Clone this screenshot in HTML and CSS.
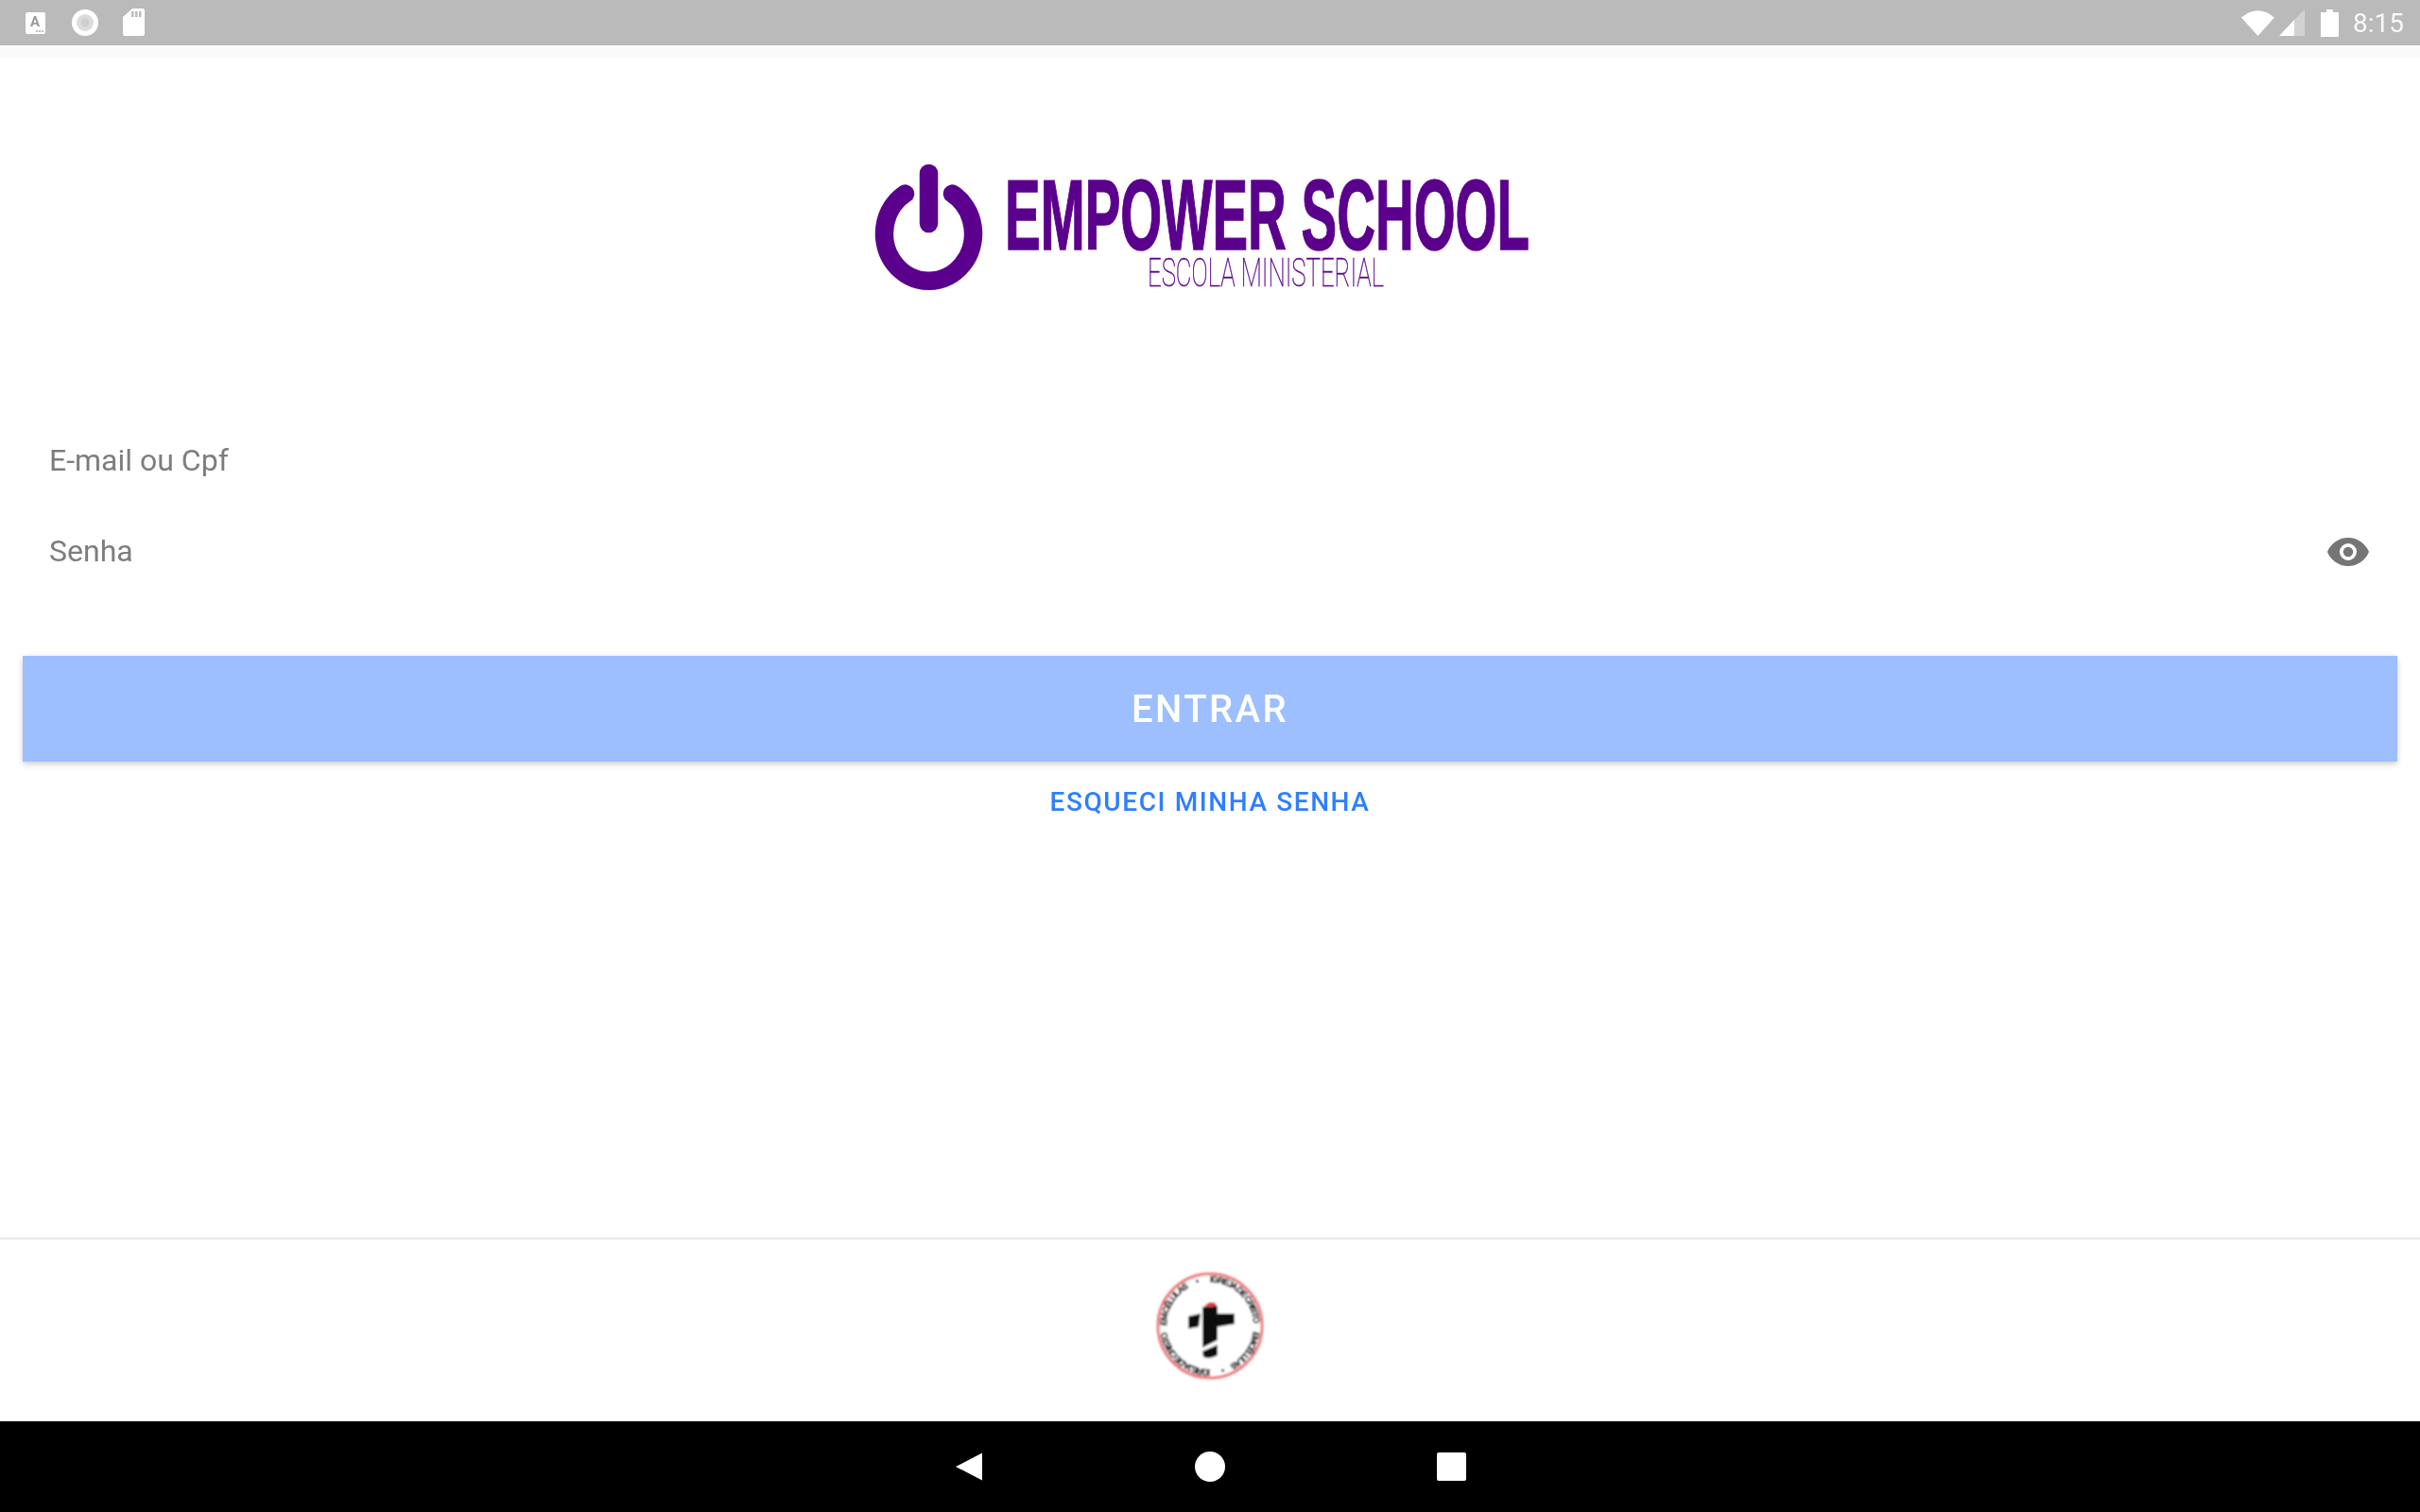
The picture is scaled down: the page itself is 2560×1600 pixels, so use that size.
FILE: index.html
```html
<!DOCTYPE html>
<html lang="pt-BR">
<head>
<meta charset="utf-8">
<title>Empower School</title>
<link rel="stylesheet" href="styles.css">
</head>
<body>
<div class="app">
  <header class="status-bar">
    <div class="status-left">
      <svg class="ic-a" viewBox="0 0 21 23"><rect width="21" height="23" rx="2" fill="#fff"/><text x="10" y="15" class="ic-a-letter">A</text><rect x="11" y="19" width="2" height="2" fill="#bbb"/><rect x="14" y="19" width="2" height="2" fill="#bbb"/><rect x="17" y="19" width="2" height="2" fill="#bbb"/></svg>
      <svg class="ic-rec" viewBox="0 0 28 28"><circle cx="14" cy="14" r="14" fill="#fff"/><circle cx="14" cy="14" r="9" fill="#dcdcdc"/><circle cx="14" cy="14" r="4.5" fill="#cfcfcf"/></svg>
      <svg class="ic-sd" viewBox="0 0 23 29"><path d="M10 0H21a2 2 0 0 1 2 2V27a2 2 0 0 1-2 2H2a2 2 0 0 1-2-2V9Z" fill="#fff"/><rect x="9" y="3" width="2.5" height="6" fill="#bbb"/><rect x="13" y="3" width="2.5" height="6" fill="#bbb"/><rect x="17" y="3" width="2.5" height="6" fill="#bbb"/></svg>
    </div>
    <div class="status-right">
      <svg class="ic-wifi" viewBox="0 0 35 28"><path d="M0 8.500Q17.500 -6 35 8.500L17.500 28Z" fill="#fff"/></svg>
      <svg class="ic-signal" viewBox="0 0 27 28"><path d="M27 0V28H16V11Z" fill="#d2d2d2"/><path d="M16 11V28H0Z" fill="#fff"/></svg>
      <svg class="ic-battery" viewBox="0 0 19 29"><path d="M6 0H13V3H19V29H0V3H6Z" fill="#fff"/></svg>
      <span class="clock">8:15</span>
    </div>
  </header>
  <div class="status-shade"></div>

  <main class="login">
    <svg class="logo" viewBox="0 0 720 160" role="img" aria-label="Empower School">
      <path class="logo-ring" d="M37.500 45A47 50 0 1 0 87.500 45"/>
      <path class="logo-bar" d="M62.500 23.500V76.500"/>
      <text class="logo-title" x="143" y="104" textLength="555" lengthAdjust="spacingAndGlyphs">EMPOWER SCHOOL</text>
      <text class="logo-sub" x="294" y="143" textLength="250" lengthAdjust="spacingAndGlyphs">ESCOLA MINISTERIAL</text>
    </svg>

    <form class="form">
      <div class="field"><span class="placeholder">E-mail ou Cpf</span></div>
      <div class="field">
        <span class="placeholder">Senha</span>
        <svg class="eye" viewBox="0 0 24 24"><path fill-rule="evenodd" d="M12 4.500C7 4.500 2.730 7.610 1 12c1.730 4.390 6 7.500 11 7.500s9.270-3.110 11-7.500c-1.730-4.390-6-7.500-11-7.500zM12 7.500a4.500 4.500 0 1 0 0 9a4.500 4.500 0 1 0 0-9zM12 9.400a2.600 2.600 0 1 1 0 5.200a2.600 2.600 0 1 1 0-5.200z"/></svg>
      </div>
      <div class="submit">ENTRAR</div>
      <a class="forgot">ESQUECI MINHA SENHA</a>
    </form>
  </main>

  <footer class="brand-footer">
    <svg class="seal" viewBox="0 0 120 120" role="img" aria-label="Igreja de Cristo em Células">
      <defs>
        <filter id="soft" x="-10%" y="-10%" width="120%" height="120%"><feGaussianBlur stdDeviation="0.9"/></filter>
        <path id="seal-path" d="M14 60A46 46 0 1 1 106 60A46 46 0 1 1 14 60"/>
      </defs>
      <g filter="url(#soft)">
        <circle class="seal-rim" cx="60" cy="60" r="55"/>
        <text class="seal-text" textLength="49"><textPath href="#seal-path" startOffset="0%">EM CÉLULAS</textPath></text>
        <text class="seal-text"><textPath href="#seal-path" startOffset="20%">•</textPath></text>
        <text class="seal-text" textLength="70"><textPath href="#seal-path" startOffset="25%">IGREJA DE CRISTO</textPath></text>
        <text class="seal-text" textLength="45"><textPath href="#seal-path" startOffset="52%">EM CÉLULAS</textPath></text>
        <text class="seal-text"><textPath href="#seal-path" startOffset="70%">•</textPath></text>
        <text class="seal-text" textLength="66"><textPath href="#seal-path" startOffset="75%">IGREJA DE CRISTO</textPath></text>
        <path class="seal-cross" d="M37 50L50 47L48 61L37 63Z"/>
        <path class="seal-cross" d="M52 40L68 39V47H86V58L68 61V75L52 83Z"/>
        <path class="seal-cross" d="M52 87L68 80V91Q60 96 53 93Z"/>
        <path class="seal-red" d="M54 40Q58 33 66 36L67 39Z"/>
      </g>
    </svg>
  </footer>

  <nav class="nav-bar">
    <svg class="nav-back" viewBox="0 0 30 32"><path d="M29 1.500V30.500L1 16Z"/></svg>
    <svg class="nav-home" viewBox="0 0 32 32"><circle cx="16" cy="16" r="16"/></svg>
    <svg class="nav-recent" viewBox="0 0 31 30"><rect width="31" height="30" rx="2"/></svg>
  </nav>
</div>
</body>
</html>
```

FILE: styles.css
```css
* { box-sizing: border-box; }

html, body {
  margin: 0;
  padding: 0;
  background: #fff;
}

.app {
  width: 2560px;
  height: 1600px;
  display: flex;
  flex-direction: column;
  overflow: hidden;
  font-family: Roboto, "Liberation Sans", sans-serif;
  will-change: transform;
}

/* Status bar */
.status-bar {
  height: 48px;
  flex: none;
  background: #bababa;
  display: flex;
  justify-content: space-between;
  align-items: center;
  padding: 0 17px 0 27px;
}
.status-left, .status-right { display: flex; align-items: center; }
.ic-a { width: 21px; height: 23px; margin-right: 28px; }
.ic-a-letter { font: 700 15px Roboto, sans-serif; fill: #9a9a9a; text-anchor: middle; }
.ic-rec { width: 28px; height: 28px; margin-right: 26px; }
.ic-sd { width: 23px; height: 29px; margin-top: -1px; }
.ic-wifi { width: 35px; height: 28px; margin-right: 5px; }
.ic-signal { width: 27px; height: 28px; margin-right: 17px; }
.ic-battery { width: 19px; height: 29px; margin-right: 15px; }
.clock {
  font-size: 28px;
  line-height: 48px;
  color: #f8f8f8;
  padding-top: 1px;
}
.status-shade { height: 12px; flex: none; background: #fafafa; }

/* Login */
.login { flex: none; }
.logo {
  display: block;
  width: 720px;
  height: 160px;
  margin: 100px 0 0 920px;
  overflow: visible;
}
.logo-ring, .logo-bar {
  fill: none;
  stroke: #5b008c;
  stroke-width: 19.500;
  stroke-linecap: round;
}
.logo-title {
  font-family: "Liberation Sans Narrow", "Liberation Sans", sans-serif;
  font-weight: 700;
  font-size: 105px;
  fill: #5b008c;
  stroke: #5b008c;
  stroke-width: 1.500px;
}
.logo-sub {
  font-family: Roboto, sans-serif;
  font-weight: 100;
  font-size: 43px;
  fill: #5b008c;
  stroke: #5b008c;
  stroke-width: 0.500px;
}

.form {
  margin: 119px 24px 0;
  display: flex;
  flex-direction: column;
}
.field {
  height: 96px;
  padding: 0 28px 0 28px;
  display: flex;
  align-items: center;
  justify-content: space-between;
}
.placeholder {
  font-size: 32px;
  line-height: 96px;
  color: #7d7d7d;
}
.eye { width: 48px; height: 48px; fill: #757575; margin-top: 2px; }

.submit {
  margin-top: 63px;
  height: 112px;
  padding-top: 2px;
  background: #9dbfff;
  color: #fff;
  font-size: 40px;
  font-weight: 500;
  letter-spacing: 2.400px;
  line-height: 110px;
  text-align: center;
  box-shadow: 0 3px 6px rgba(0, 0, 0, 0.16), 0 0 8px rgba(0, 0, 0, 0.06);
}
.forgot {
  margin-top: 23px;
  font-size: 28px;
  font-weight: 500;
  letter-spacing: 1.600px;
  line-height: 40px;
  text-align: center;
  color: #2f7fff;
}

/* Footer seal */
.brand-footer {
  margin-top: auto;
  height: 195px;
  flex: none;
  border-top: 3px solid #eeeeee;
  display: flex;
  justify-content: center;
  padding-top: 31px;
}
.seal { width: 120px; height: 120px; }
.seal-rim { fill: #fff; stroke: #ee7a7a; stroke-width: 3; }
.seal-text { font: 700 9.500px "Liberation Sans", sans-serif; fill: #000; stroke: #000; stroke-width: 0.300px; }
.seal-cross { fill: #111; }
.seal-red { fill: #e0393f; }

/* Navigation bar */
.nav-bar {
  height: 96px;
  flex: none;
  background: #000;
  display: flex;
  align-items: center;
  padding-left: 1010px;
}
.nav-bar svg { fill: #fff; display: block; }
.nav-back { width: 30px; height: 32px; margin-right: 224px; }
.nav-home { width: 32px; height: 32px; margin-right: 224px; }
.nav-recent { width: 31px; height: 30px; }
```
